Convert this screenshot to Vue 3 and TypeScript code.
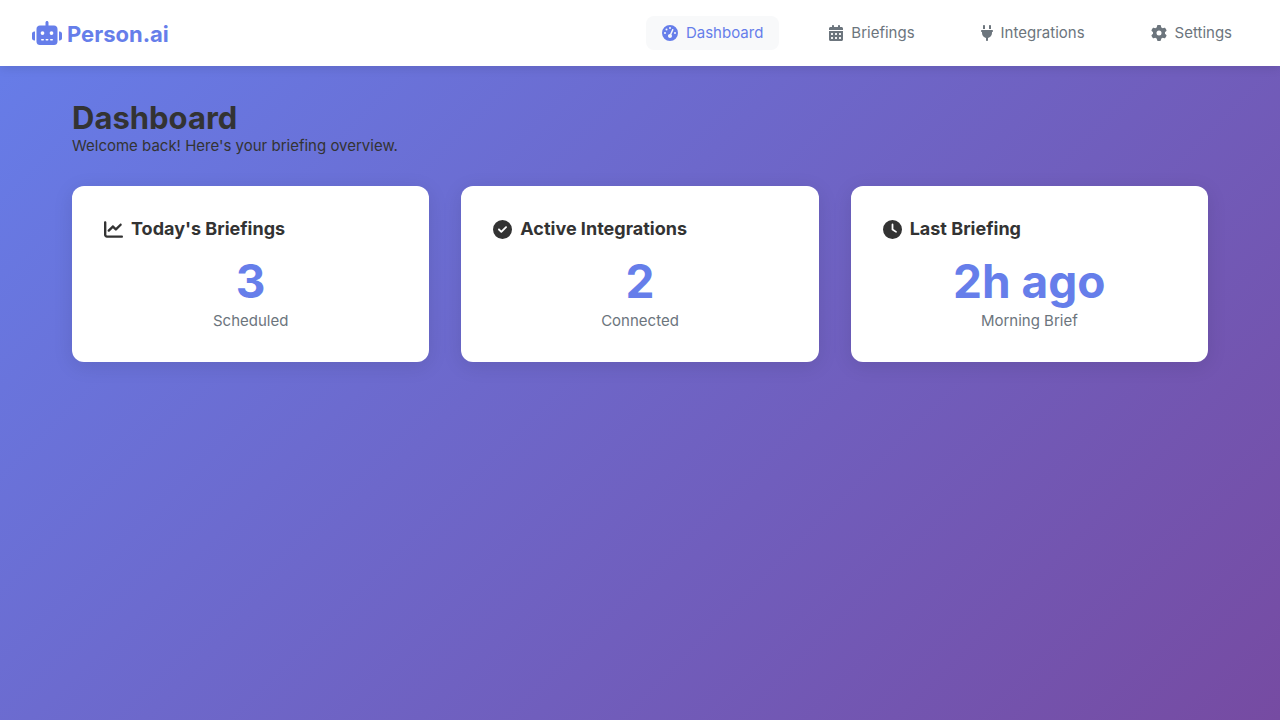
<script setup lang="ts">
interface Icon {
  width: number
  path: string
}

interface NavItem {
  label: string
  icon: Icon
  active?: boolean
}

interface Stat {
  title: string
  value: string
  label: string
  icon: Icon
}

const robot: Icon = {
  width: 640,
  path: 'M320 0c17.7 0 32 14.3 32 32V96H472c39.8 0 72 32.2 72 72V440c0 39.8-32.2 72-72 72H168c-39.8 0-72-32.2-72-72V168c0-39.8 32.2-72 72-72H288V32c0-17.7 14.3-32 32-32zM208 384c-8.8 0-16 7.2-16 16s7.2 16 16 16h32c8.8 0 16-7.2 16-16s-7.2-16-16-16H208zm96 0c-8.8 0-16 7.2-16 16s7.2 16 16 16h32c8.8 0 16-7.2 16-16s-7.2-16-16-16H304zm96 0c-8.8 0-16 7.2-16 16s7.2 16 16 16h32c8.8 0 16-7.2 16-16s-7.2-16-16-16H400zM264 256a40 40 0 1 0-80 0 40 40 0 1 0 80 0zm152 40a40 40 0 1 0 0-80 40 40 0 1 0 0 80zM48 224H64V416H48c-26.5 0-48-21.5-48-48V272c0-26.5 21.5-48 48-48zm544 0c26.5 0 48 21.5 48 48v96c0 26.5-21.5 48-48 48H576V224h16z',
}

const navItems: NavItem[] = [
  {
    label: 'Dashboard',
    active: true,
    icon: {
      width: 512,
      path: 'M0 256a256 256 0 1 1 512 0A256 256 0 1 1 0 256zM288 96a32 32 0 1 0-64 0 32 32 0 1 0 64 0zM256 416c35.3 0 64-28.7 64-64c0-17.4-6.9-33.1-18.1-44.6L366 161.7c5.3-12.1-.2-26.3-12.3-31.6s-26.3 .2-31.6 12.3L257.9 288c-.6 0-1.3 0-1.9 0c-35.3 0-64 28.7-64 64s28.7 64 64 64zM176 144a32 32 0 1 0-64 0 32 32 0 1 0 64 0zM96 288a32 32 0 1 0 0-64 32 32 0 1 0 0 64zm352-32a32 32 0 1 0-64 0 32 32 0 1 0 64 0z',
    },
  },
  {
    label: 'Briefings',
    icon: {
      width: 448,
      path: 'M128 0c17.7 0 32 14.3 32 32V64H288V32c0-17.7 14.3-32 32-32s32 14.3 32 32V64h48c26.5 0 48 21.5 48 48v48H0V112C0 85.5 21.5 64 48 64H96V32c0-17.7 14.3-32 32-32zM0 192H448V464c0 26.5-21.5 48-48 48H48c-26.5 0-48-21.5-48-48V192zm64 80v32c0 8.8 7.2 16 16 16h32c8.8 0 16-7.2 16-16V272c0-8.8-7.2-16-16-16H80c-8.8 0-16 7.2-16 16zm128 0v32c0 8.8 7.2 16 16 16h32c8.8 0 16-7.2 16-16V272c0-8.8-7.2-16-16-16H208c-8.8 0-16 7.2-16 16zm144-16c-8.8 0-16 7.2-16 16v32c0 8.8 7.2 16 16 16h32c8.8 0 16-7.2 16-16V272c0-8.8-7.2-16-16-16H336zM64 400v32c0 8.8 7.2 16 16 16h32c8.8 0 16-7.2 16-16V400c0-8.8-7.2-16-16-16H80c-8.8 0-16 7.2-16 16zm144-16c-8.8 0-16 7.2-16 16v32c0 8.8 7.2 16 16 16h32c8.8 0 16-7.2 16-16V400c0-8.8-7.2-16-16-16H208zm112 16v32c0 8.8 7.2 16 16 16h32c8.8 0 16-7.2 16-16V400c0-8.8-7.2-16-16-16H336c-8.8 0-16 7.2-16 16z',
    },
  },
  {
    label: 'Integrations',
    icon: {
      width: 384,
      path: 'M96 0C78.3 0 64 14.3 64 32v96h64V32c0-17.7-14.3-32-32-32zM288 0c-17.7 0-32 14.3-32 32v96h64V32c0-17.7-14.3-32-32-32zM32 160c-17.7 0-32 14.3-32 32s14.3 32 32 32v32c0 77.4 55 142 128 156.8V480c0 17.7 14.3 32 32 32s32-14.3 32-32V412.8C297 398 352 333.4 352 256V224c17.7 0 32-14.3 32-32s-14.3-32-32-32H32z',
    },
  },
  {
    label: 'Settings',
    icon: {
      width: 512,
      path: 'M495.9 166.6c3.2 8.7 .5 18.4-6.4 24.6l-43.3 39.4c1.1 8.3 1.7 16.8 1.7 25.4s-.6 17.1-1.7 25.4l43.3 39.4c6.9 6.2 9.6 15.9 6.4 24.6c-4.4 11.9-9.7 23.3-15.8 34.3l-4.7 8.1c-6.6 11-14 21.4-22.1 31.2c-5.9 7.2-15.7 9.6-24.5 6.8l-55.7-17.7c-13.4 10.3-28.2 18.9-44 25.4l-12.5 57.1c-2 9.1-9 16.3-18.2 17.8c-13.8 2.3-28 3.5-42.5 3.5s-28.7-1.2-42.5-3.5c-9.2-1.5-16.2-8.7-18.2-17.8l-12.5-57.1c-15.8-6.5-30.6-15.1-44-25.4L83.1 425.9c-8.8 2.8-18.6 .3-24.5-6.8c-8.1-9.8-15.5-20.2-22.1-31.2l-4.7-8.1c-6.1-11-11.4-22.4-15.8-34.3c-3.2-8.7-.5-18.4 6.4-24.6l43.3-39.4C64.6 273.1 64 264.6 64 256s.6-17.1 1.7-25.4L22.4 191.2c-6.9-6.2-9.6-15.9-6.4-24.6c4.4-11.9 9.7-23.3 15.8-34.3l4.7-8.1c6.6-11 14-21.4 22.1-31.2c5.9-7.2 15.7-9.6 24.5-6.8l55.7 17.7c13.4-10.3 28.2-18.9 44-25.4l12.5-57.1c2-9.1 9-16.3 18.2-17.8C227.3 1.2 241.5 0 256 0s28.7 1.2 42.5 3.5c9.2 1.5 16.2 8.7 18.2 17.8l12.5 57.1c15.8 6.5 30.6 15.1 44 25.4l55.7-17.7c8.8-2.8 18.6-.3 24.5 6.8c8.1 9.8 15.5 20.2 22.1 31.2l4.7 8.1c6.1 11 11.4 22.4 15.8 34.3zM256 336a80 80 0 1 0 0-160 80 80 0 1 0 0 160z',
    },
  },
]

const stats: Stat[] = [
  {
    title: "Today's Briefings",
    value: '3',
    label: 'Scheduled',
    icon: {
      width: 512,
      path: 'M64 64c0-17.7-14.3-32-32-32S0 46.3 0 64V400c0 44.2 35.8 80 80 80H480c17.7 0 32-14.3 32-32s-14.3-32-32-32H80c-8.8 0-16-7.2-16-16V64zm406.6 86.6c12.5-12.5 12.5-32.8 0-45.3s-32.8-12.5-45.3 0L320 210.7l-57.4-57.4c-12.5-12.5-32.8-12.5-45.3 0l-112 112c-12.5 12.5-12.5 32.8 0 45.3s32.8 12.5 45.3 0L240 221.3l57.4 57.4c12.5 12.5 32.8 12.5 45.3 0l128-128z',
    },
  },
  {
    title: 'Active Integrations',
    value: '2',
    label: 'Connected',
    icon: {
      width: 512,
      path: 'M256 512A256 256 0 1 0 256 0a256 256 0 1 0 0 512zM369 209L241 337c-9.4 9.4-24.6 9.4-33.9 0l-64-64c-9.4-9.4-9.4-24.6 0-33.9s24.6-9.4 33.9 0l47 47L335 175c9.4-9.4 24.6-9.4 33.9 0s9.4 24.6 0 33.9z',
    },
  },
  {
    title: 'Last Briefing',
    value: '2h ago',
    label: 'Morning Brief',
    icon: {
      width: 512,
      path: 'M256 0a256 256 0 1 1 0 512A256 256 0 1 1 256 0zM232 120V256c0 8 4 15.5 10.7 20l96 64c11 7.4 25.9 4.4 33.3-6.7s4.4-25.9-6.7-33.3L280 243.2V120c0-13.3-10.7-24-24-24s-24 10.7-24 24z',
    },
  },
]
</script>

<template>
  <div class="app">
    <header class="navbar">
      <a class="brand" href="#">
        <svg class="icon" :viewBox="`0 0 ${robot.width} 512`" aria-hidden="true"><path :d="robot.path" /></svg>
        <span>Person.ai</span>
      </a>
      <nav class="menu" aria-label="Main">
        <a
          v-for="item in navItems"
          :key="item.label"
          class="link"
          :class="{ active: item.active }"
          :aria-current="item.active ? 'page' : undefined"
          href="#"
        >
          <svg class="icon" :viewBox="`0 0 ${item.icon.width} 512`" aria-hidden="true"><path :d="item.icon.path" /></svg>
          <span>{{ item.label }}</span>
        </a>
      </nav>
    </header>

    <main class="content">
      <div class="heading">
        <h1>Dashboard</h1>
        <p>Welcome back! Here's your briefing overview.</p>
      </div>
      <div class="cards">
        <section v-for="stat in stats" :key="stat.title" class="card">
          <h2>
            <svg class="icon" :viewBox="`0 0 ${stat.icon.width} 512`" aria-hidden="true"><path :d="stat.icon.path" /></svg>
            <span>{{ stat.title }}</span>
          </h2>
          <p class="value">{{ stat.value }}</p>
          <p class="label">{{ stat.label }}</p>
        </section>
      </div>
    </main>
  </div>
</template>

<style>
body {
  margin: 0;
}
</style>

<style scoped>
.app {
  min-height: 100vh;
  background: linear-gradient(135deg, #667eea 0%, #764ba2 100%);
  color: #333;
  font-family: Inter, "Liberation Sans", sans-serif;
  font-size: 15px;
  line-height: 18px;
}

.icon {
  flex: none;
  width: auto;
  height: 16px;
  fill: currentColor;
}

.navbar {
  display: flex;
  align-items: center;
  justify-content: space-between;
  padding: 16px 32px;
  background: #fff;
  box-shadow: 0 2px 10px rgba(0, 0, 0, 0.1);
}

.brand {
  display: flex;
  align-items: center;
  gap: 5px;
  color: #667eea;
  font-size: 22px;
  font-weight: 700;
  line-height: 30px;
  text-decoration: none;
}

.brand .icon {
  height: 24px;
}

.brand span {
  padding-top: 2px;
}

.menu {
  display: flex;
  gap: 34px;
}

.link {
  display: flex;
  align-items: center;
  gap: 8px;
  padding: 8px 16px;
  border-radius: 8px;
  color: #6c757d;
  text-decoration: none;
}

.link.active {
  background: #f8f9fa;
  color: #667eea;
}

.content {
  box-sizing: border-box;
  max-width: 1200px;
  margin: 0 auto;
  padding: 32px;
}

.heading {
  margin-bottom: 32px;
}

h1,
h2,
p {
  margin: 0;
}

h1 {
  font-size: 31px;
  line-height: 40px;
}

.heading p {
  line-height: 16px;
}

.cards {
  display: grid;
  grid-template-columns: repeat(auto-fit, minmax(300px, 1fr));
  gap: 32px;
}

.card {
  padding: 32px;
  border-radius: 12px;
  background: #fff;
  box-shadow: 0 4px 20px rgba(0, 0, 0, 0.1);
}

h2 {
  display: flex;
  align-items: center;
  gap: 8px;
  margin-bottom: 16px;
  font-size: 18px;
  line-height: 22px;
}

h2 .icon {
  height: 19px;
}

.value {
  margin-bottom: 6px;
  color: #667eea;
  font-size: 46px;
  font-weight: 700;
  line-height: 50px;
  text-align: center;
}

.label {
  color: #6c757d;
  text-align: center;
}
</style>
